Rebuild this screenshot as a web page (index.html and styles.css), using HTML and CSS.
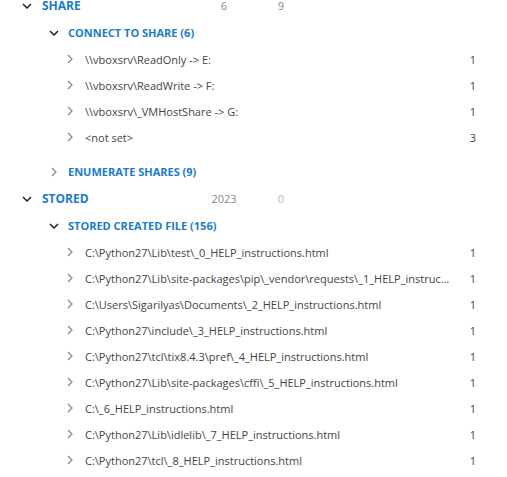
FILE: index.html
```html
<!DOCTYPE html>
<html lang="en">
<head>
  <meta charset="UTF-8">
  <meta name="viewport" content="width=device-width, initial-scale=1.0">
  <title>Shares</title>
  <link rel="stylesheet" href="styles.css">
</head>
<body>
  <div class="tree">
    <!-- SHARE -->
    <div class="group">
      <div class="row top">
        <span class="chev open"><svg width="10" height="6" viewBox="0 0 10 6"><path d="M1 1l4 4 4-4"/></svg></span>
        <span class="title">SHARE</span>
        <span class="col a">6</span>
        <span class="col b">9</span>
      </div>
      <div class="group sub">
        <div class="row mid">
          <span class="chev open"><svg width="10" height="6" viewBox="0 0 10 6"><path d="M1 1l4 4 4-4"/></svg></span>
          <span class="title">CONNECT TO SHARE (6)</span>
        </div>
        <div class="leaves">
          <div class="row leaf"><span class="chev"><svg width="6" height="10" viewBox="0 0 6 10"><path d="M1 1l4 4-4 4"/></svg></span><span class="label">\\vboxsrv\ReadOnly -&gt; E:</span><span class="count">1</span></div>
          <div class="row leaf"><span class="chev"><svg width="6" height="10" viewBox="0 0 6 10"><path d="M1 1l4 4-4 4"/></svg></span><span class="label">\\vboxsrv\ReadWrite -&gt; F:</span><span class="count">1</span></div>
          <div class="row leaf"><span class="chev"><svg width="6" height="10" viewBox="0 0 6 10"><path d="M1 1l4 4-4 4"/></svg></span><span class="label">\\vboxsrv\_VMHostShare -&gt; G:</span><span class="count">1</span></div>
          <div class="row leaf"><span class="chev"><svg width="6" height="10" viewBox="0 0 6 10"><path d="M1 1l4 4-4 4"/></svg></span><span class="label">&lt;not set&gt;</span><span class="count">3</span></div>
        </div>
        <div class="row mid">
          <span class="chev closed"><svg width="6" height="10" viewBox="0 0 6 10"><path d="M1 1l4 4-4 4"/></svg></span>
          <span class="title">ENUMERATE SHARES (9)</span>
        </div>
      </div>
    </div>

    <!-- STORED -->
    <div class="group">
      <div class="row top">
        <span class="chev open"><svg width="10" height="6" viewBox="0 0 10 6"><path d="M1 1l4 4 4-4"/></svg></span>
        <span class="title">STORED</span>
        <span class="col a">2023</span>
        <span class="col b dim">0</span>
      </div>
      <div class="group sub">
        <div class="row mid">
          <span class="chev open"><svg width="10" height="6" viewBox="0 0 10 6"><path d="M1 1l4 4 4-4"/></svg></span>
          <span class="title">STORED CREATED FILE (156)</span>
        </div>
        <div class="leaves">
          <div class="row leaf"><span class="chev"><svg width="6" height="10" viewBox="0 0 6 10"><path d="M1 1l4 4-4 4"/></svg></span><span class="label">C:\Python27\Lib\test\_0_HELP_instructions.html</span><span class="count">1</span></div>
          <div class="row leaf"><span class="chev"><svg width="6" height="10" viewBox="0 0 6 10"><path d="M1 1l4 4-4 4"/></svg></span><span class="label">C:\Python27\Lib\site-packages\pip\_vendor\requests\_1_HELP_instructions.html</span><span class="count">1</span></div>
          <div class="row leaf"><span class="chev"><svg width="6" height="10" viewBox="0 0 6 10"><path d="M1 1l4 4-4 4"/></svg></span><span class="label">C:\Users\Sigarilyas\Documents\_2_HELP_instructions.html</span><span class="count">1</span></div>
          <div class="row leaf"><span class="chev"><svg width="6" height="10" viewBox="0 0 6 10"><path d="M1 1l4 4-4 4"/></svg></span><span class="label">C:\Python27\include\_3_HELP_instructions.html</span><span class="count">1</span></div>
          <div class="row leaf"><span class="chev"><svg width="6" height="10" viewBox="0 0 6 10"><path d="M1 1l4 4-4 4"/></svg></span><span class="label">C:\Python27\tcl\tix8.4.3\pref\_4_HELP_instructions.html</span><span class="count">1</span></div>
          <div class="row leaf"><span class="chev"><svg width="6" height="10" viewBox="0 0 6 10"><path d="M1 1l4 4-4 4"/></svg></span><span class="label">C:\Python27\Lib\site-packages\cffi\_5_HELP_instructions.html</span><span class="count">1</span></div>
          <div class="row leaf"><span class="chev"><svg width="6" height="10" viewBox="0 0 6 10"><path d="M1 1l4 4-4 4"/></svg></span><span class="label">C:\_6_HELP_instructions.html</span><span class="count">1</span></div>
          <div class="row leaf"><span class="chev"><svg width="6" height="10" viewBox="0 0 6 10"><path d="M1 1l4 4-4 4"/></svg></span><span class="label">C:\Python27\Lib\idlelib\_7_HELP_instructions.html</span><span class="count">1</span></div>
          <div class="row leaf"><span class="chev"><svg width="6" height="10" viewBox="0 0 6 10"><path d="M1 1l4 4-4 4"/></svg></span><span class="label">C:\Python27\tcl\_8_HELP_instructions.html</span><span class="count">1</span></div>
        </div>
      </div>
    </div>
  </div>
</body>
</html>
```

FILE: styles.css
```css
html, body {
  margin: 0;
  padding: 0;
  background: #fff;
}
body {
  font-family: "Open Sans", "Noto Sans", sans-serif;
  font-size: 11px;
  color: #444;
  overflow: hidden;
}
.tree {
  width: 456px;
  margin-top: -8px;
  padding-left: 20px;
}
.row {
  display: flex;
  align-items: center;
  white-space: nowrap;
}
.row.top,
.row.mid {
  height: 27px;
}
.row.leaf {
  height: 26px;
}
.chev {
  display: flex;
  align-items: center;
  justify-content: center;
  width: 14px;
  flex: none;
}
.chev svg path {
  fill: none;
  stroke: #8a8a8a;
  stroke-width: 1.3;
}
.chev.open svg path {
  stroke: #222;
  stroke-width: 1.5;
}
.title {
  color: #1b7cc8;
  font-weight: 700;
}
.row.top .title {
  font-size: 12px;
  margin-left: 8px;
  width: 162px;
}
.row.mid .title {
  margin-left: 7px;
}
.col {
  color: #888;
  text-align: center;
  width: 40px;
}
.col.b {
  margin-left: 17px;
}
.col.dim {
  color: #bbb;
}
.sub {
  padding-left: 27px;
}
.leaves {
  padding-left: 20px;
  padding-bottom: 8px;
}
.leaf .chev {
  width: 10px;
  justify-content: flex-start;
}
.leaf .label {
  flex: 1;
  min-width: 0;
  margin-left: 8px;
  overflow: hidden;
  text-overflow: ellipsis;
  padding-right: 14px;
}
.leaf .count {
  flex: none;
  width: 10px;
  text-align: right;
}
```
